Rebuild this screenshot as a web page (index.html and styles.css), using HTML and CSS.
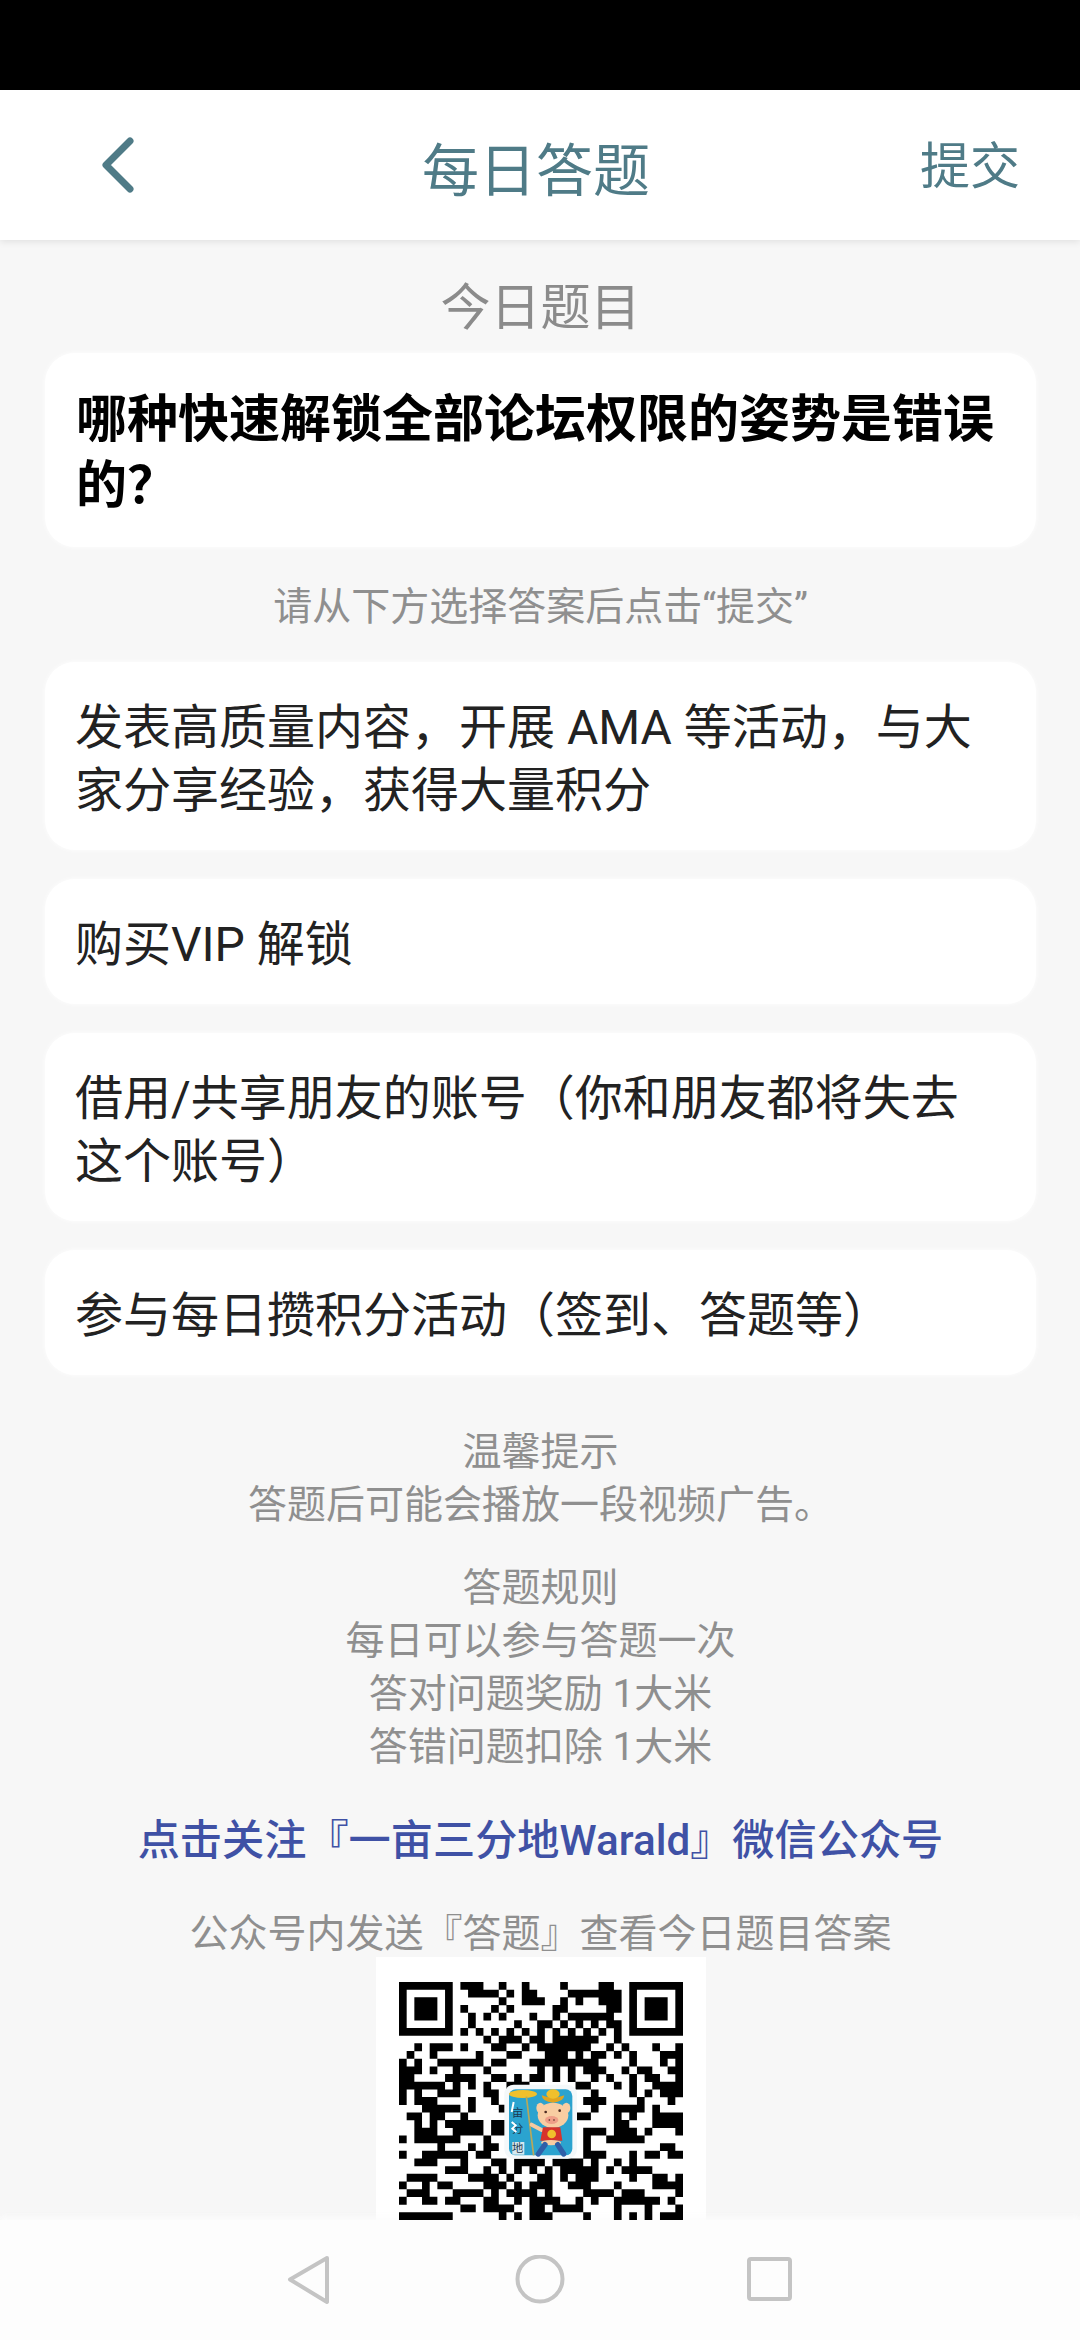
FILE: index.html
```html
<!DOCTYPE html>
<html lang="zh-CN">
<head>
<meta charset="utf-8">
<title>每日答题</title>
<link rel="stylesheet" href="styles.css">
</head>
<body>
<div class="status-bar"></div>
<header class="app-bar">
  <svg class="back" viewBox="0 0 40 64" aria-hidden="true"><path d="M33 8 L9 32 L33 56"/></svg>
  <h1 class="title">每日答题</h1>
  <span class="submit">提交</span>
</header>
<main class="content">
  <h2 class="section-title">今日题目</h2>
  <div class="card question">哪种快速解锁全部论坛权限的姿势是错误的？</div>
  <p class="hint">请从下方选择答案后点击“提交”</p>
  <div class="options">
    <div class="card option">发表高质量内容，开展 AMA 等活动，与大家分享经验，获得大量积分</div>
    <div class="card option">购买VIP 解锁</div>
    <div class="card option">借用/共享朋友的账号（你和朋友都将失去这个账号）</div>
    <div class="card option">参与每日攒积分活动（签到、答题等）</div>
  </div>
  <div class="notes notes-tip">
    <p>温馨提示</p>
    <p>答题后可能会播放一段视频广告。</p>
  </div>
  <div class="notes notes-rules">
    <p>答题规则</p>
    <p>每日可以参与答题一次</p>
    <p>答对问题奖励 1大米</p>
    <p>答错问题扣除 1大米</p>
  </div>
  <a class="follow">点击关注『一亩三分地Warald』微信公众号</a>
  <p class="send">公众号内发送『答题』查看今日题目答案</p>
  <div class="qr-box">
    <div class="qr">
      <svg class="qr-code" viewBox="0 0 37 31" aria-hidden="true"><path d="M0 .5h7M8 .5h3M13 .5h1M16 .5h1M21 .5h1M26 .5h2M30 .5h7
M0 1.5h1M6 1.5h1M9 1.5h4M14 1.5h1M16 1.5h2M22 1.5h7M30 1.5h1M36 1.5h1
M0 2.5h1M2 2.5h3M6 2.5h1M13 2.5h1M16 2.5h3M21 2.5h1M23 2.5h1M26 2.5h3M30 2.5h1M32 2.5h3M36 2.5h1
M0 3.5h1M2 3.5h3M6 3.5h1M8 3.5h1M12 3.5h1M14 3.5h1M20 3.5h2M27 3.5h2M30 3.5h1M32 3.5h3M36 3.5h1
M0 4.5h1M2 4.5h3M6 4.5h1M9 4.5h1M11 4.5h1M13 4.5h1M17 4.5h1M20 4.5h1M22 4.5h6M30 4.5h1M32 4.5h3M36 4.5h1
M0 5.5h1M6 5.5h1M9 5.5h1M15 5.5h1M18 5.5h2M21 5.5h1M23 5.5h1M25 5.5h1M27 5.5h2M30 5.5h1M36 5.5h1
M0 6.5h7M8 6.5h1M10 6.5h1M12 6.5h1M14 6.5h1M16 6.5h1M18 6.5h1M20 6.5h1M22 6.5h1M24 6.5h1M26 6.5h1M28 6.5h1M30 6.5h7
M11 7.5h1M13 7.5h3M17 7.5h2M20 7.5h6M28 7.5h1
M2 8.5h1M4 8.5h3M8 8.5h1M12 8.5h2M16 8.5h1M18 8.5h7M27 8.5h1M29 8.5h1M33 8.5h1M36 8.5h1
M1 9.5h1M4 9.5h1M10 9.5h1M14 9.5h2M19 9.5h3M23 9.5h1M25 9.5h2M28 9.5h1M30 9.5h1M34 9.5h3
M0 10.5h1M2 10.5h1M5 10.5h6M12 10.5h2M17 10.5h9M30 10.5h1M34 10.5h1M36 10.5h1
M0 11.5h3M4 11.5h1M7 11.5h1M11 11.5h1M18 11.5h1M20 11.5h1M22 11.5h1M24 11.5h3M29 11.5h1M31 11.5h2M35 11.5h2
M0 12.5h2M6 12.5h4M12 12.5h2M15 12.5h1M17 12.5h2M20 12.5h1M22 12.5h1M25 12.5h1M27 12.5h1M30 12.5h1M32 12.5h2M36 12.5h1
M0 13.5h6M7 13.5h1M9 13.5h1M11 13.5h1M14 13.5h3M23 13.5h2M28 13.5h1M30 13.5h1M33 13.5h4
M0 14.5h1M2 14.5h1M5 14.5h3M11 14.5h2M25 14.5h1M30 14.5h1M32 14.5h1M34 14.5h3
M0 15.5h1M2 15.5h3M9 15.5h1M12 15.5h1M24 15.5h3M31 15.5h1M35 15.5h1
M3 16.5h5M9 16.5h1M13 16.5h1M25 16.5h1M28 16.5h4M33 16.5h1
M1 17.5h2M4 17.5h2M8 17.5h1M23 17.5h2M28 17.5h1M30 17.5h1M33 17.5h4
M2 18.5h1M4 18.5h1M6 18.5h5M12 18.5h2M28 18.5h2M33 18.5h4
M2 19.5h3M7 19.5h4M12 19.5h2M24 19.5h3M28 19.5h3M32 19.5h1M36 19.5h1
M0 20.5h1M2 20.5h6M11 20.5h1M24 20.5h1M27 20.5h5
M5 21.5h1M9 21.5h1M11 21.5h2M24 21.5h1M34 21.5h2
M0 22.5h1M3 22.5h6M10 22.5h2M24 22.5h3M30 22.5h1M32 22.5h2M35 22.5h2
M2 23.5h3M8 23.5h1M12 23.5h2M15 23.5h4M20 23.5h4M25 23.5h1M28 23.5h1M30 23.5h1
M6 24.5h3M11 24.5h1M13 24.5h1M15 24.5h1M17 24.5h1M19 24.5h1M21 24.5h5M27 24.5h1M29 24.5h4
M1 25.5h4M9 25.5h4M14 25.5h1M18 25.5h2M21 25.5h1M23 25.5h3M30 25.5h1M33 25.5h2M36 25.5h1
M0 26.5h1M3 26.5h1M5 26.5h2M11 26.5h3M15 26.5h1M17 26.5h3M22 26.5h3M28 26.5h1M33 26.5h4
M1 27.5h3M7 27.5h4M12 27.5h1M14 27.5h4M19 27.5h1M24 27.5h4M29 27.5h3M36 27.5h1
M0 28.5h1M3 28.5h2M6 28.5h2M11 28.5h2M15 28.5h1M17 28.5h4M23 28.5h1M25 28.5h1M28 28.5h6M35 28.5h1
M8 29.5h2M11 29.5h4M17 29.5h2M20 29.5h4M28 29.5h1M32 29.5h1M36 29.5h1
M0 30.5h7M13 30.5h1M15 30.5h1M17 30.5h3M24 30.5h1M28 30.5h1M30 30.5h1M32 30.5h1M34 30.5h3"/></svg>
      <svg class="qr-logo" viewBox="0 0 240 240" aria-hidden="true">
        <rect class="l-frame" x="10" y="14" width="218" height="222" rx="28"/>
        <rect class="l-bg" x="24" y="28" width="190" height="198" rx="20"/>
        <ellipse class="l-gold" cx="66" cy="42" rx="42" ry="12"/>
        <path class="l-staff" d="M76 50 L98 226"/>
        <rect class="l-tag" x="34" y="186" width="36" height="38"/>
        <text class="l-char" x="50" y="110">亩</text>
        <text class="l-char" x="50" y="160">分</text>
        <text class="l-char" x="50" y="216">地</text>
        <path class="l-mark" d="M38 66 L32 96M32 126 L44 136 L34 146 L46 156"/>
        <path class="l-gold-dark" d="M122 46 Q124 66 156 68 Q188 66 190 46 Q156 60 122 46Z"/>
        <ellipse class="l-gold" cx="156" cy="42" rx="20" ry="14"/>
        <path class="l-arm" d="M122 150 L92 134"/>
        <ellipse class="l-skin" cx="118" cy="84" rx="12" ry="16"/>
        <ellipse class="l-skin" cx="196" cy="84" rx="12" ry="16"/>
        <ellipse class="l-skin" cx="156" cy="106" rx="46" ry="38"/>
        <ellipse class="l-snout" cx="152" cy="120" rx="20" ry="12"/>
        <circle class="l-eye" cx="134" cy="96" r="4"/>
        <circle class="l-eye" cx="176" cy="92" r="4"/>
        <circle class="l-eye" cx="145" cy="120" r="2.5"/>
        <circle class="l-eye" cx="159" cy="120" r="2.5"/>
        <path class="l-shirt" d="M126 142 H178 L184 182 H118Z"/>
        <circle class="l-gold" cx="152" cy="162" r="13"/>
        <ellipse class="l-skin" cx="150" cy="188" rx="30" ry="8"/>
        <path class="l-legs" d="M132 194 L112 222 M170 194 L188 222"/>
      </svg>
    </div>
  </div>
</main>
<nav class="nav-bar">
  <svg class="nav-icon" viewBox="0 0 50 50" aria-hidden="true"><path d="M43 3 L6 24.5 L43 47Z"/></svg>
  <svg class="nav-icon" viewBox="0 0 50 50" aria-hidden="true"><circle cx="25" cy="24" r="22.5"/></svg>
  <svg class="nav-icon" viewBox="0 0 50 50" aria-hidden="true"><rect x="3" y="4" width="41" height="40" rx="2"/></svg>
</nav>
</body>
</html>
```

FILE: styles.css
```css
* { box-sizing: border-box; margin: 0; padding: 0; }

html, body { height: 2340px; overflow: hidden; }

body {
  display: flex;
  flex-direction: column;
  background: #f7f7f7;
  font-family: Roboto, "Noto Sans CJK SC", sans-serif;
  color: #222;
}

.status-bar { flex: none; height: 90px; background: #000; }

.app-bar {
  flex: none;
  height: 150px;
  display: grid;
  grid-template-columns: 1fr auto 1fr;
  align-items: center;
  padding: 0 60px 0 62px;
  background: #fff;
  box-shadow: 0 2px 7px rgba(0, 0, 0, .09);
  color: #4f7b87;
}

.back {
  width: 40px;
  height: 64px;
  margin-left: 35px;
  fill: none;
  stroke: #4f7b87;
  stroke-width: 7;
  stroke-linecap: round;
  stroke-linejoin: round;
}

.title {
  margin: 14px 10px 0 0;
  font-size: 57px;
  font-weight: 400;
  line-height: 70px;
}

.submit {
  justify-self: end;
  font-size: 50px;
  line-height: 60px;
  margin-top: 4px;
}

.content {
  flex: 1;
  min-height: 0;
  overflow: hidden;
  display: flex;
  flex-direction: column;
  padding: 33px 44px 0 45px;
}

.section-title {
  padding-top: 2px;
  height: 66px;
  font-size: 50px;
  font-weight: 400;
  line-height: 66px;
  color: #8b8b8b;
  text-align: center;
}

.card {
  background: #fff;
  border-radius: 30px;
  box-shadow: 0 0 5px rgba(255, 255, 255, .9);
}

.question {
  margin-top: 14px;
  padding: 34px 33px 28px 31px;
  font-size: 51px;
  font-weight: 700;
  line-height: 66px;
  color: #000;
}

.hint {
  margin-top: 34px;
  font-size: 39px;
  line-height: 52px;
  color: #8f8f8f;
  text-align: center;
}

.options {
  display: flex;
  flex-direction: column;
  gap: 29px;
  margin-top: 29px;
}

.option {
  padding: 34px 33px 28px 30px;
  font-size: 48px;
  line-height: 63px;
}

.notes {
  font-size: 39px;
  line-height: 53px;
  color: #8f8f8f;
  text-align: center;
}

.notes-tip { margin-top: 51px; }
.notes-rules { margin-top: 30px; }

.follow {
  margin-top: 41px;
  font-size: 42.2px;
  font-weight: 500;
  line-height: 52px;
  color: #3f51a5;
  text-align: center;
}

.send {
  margin-top: 44px;
  font-size: 39px;
  line-height: 46px;
  color: #8f8f8f;
  text-align: center;
}

.qr-box {
  flex: none;
  align-self: center;
  width: 330px;
  padding: 25px 23px;
  background: #fff;
}

.qr { position: relative; width: 284px; height: 238px; }

.qr-code {
  display: block;
  width: 284px;
  height: 238px;
  fill: none;
  stroke: #000;
  stroke-width: 1.02;
}

.qr-logo { position: absolute; left: 102px; top: 98px; width: 80px; height: 80px; }

.l-frame { fill: #f4f8fa; }
.l-bg { fill: #2ba3cf; }
.l-gold { fill: #f0c02c; }
.l-gold-dark { fill: #e0a420; }
.l-staff { fill: none; stroke: #b8a85a; stroke-width: 5; }
.l-tag { fill: #d5e8ef; }
.l-char {
  font-family: "Noto Sans CJK SC", sans-serif;
  font-size: 34px;
  text-anchor: middle;
  fill: #1c3a52;
}
.l-mark { fill: none; stroke: #fff; stroke-width: 6; }
.l-arm { fill: none; stroke: #f6c9a0; stroke-width: 12; stroke-linecap: round; }
.l-skin { fill: #f8cda2; }
.l-snout { fill: #ef9f88; }
.l-eye { fill: #4a2a20; }
.l-shirt { fill: #d6332c; }
.l-legs { fill: none; stroke: #2f5fa8; stroke-width: 16; stroke-linecap: round; }

.nav-bar {
  flex: none;
  height: 120px;
  display: flex;
  align-items: center;
  gap: 181px;
  padding-left: 284px;
  background: #fdfdfd;
  box-shadow: 0 -3px 6px rgba(253, 253, 253, .9);
}

.nav-icon {
  width: 50px;
  height: 50px;
  fill: none;
  stroke: #c4c4c4;
  stroke-width: 4;
  stroke-linejoin: round;
}
```
